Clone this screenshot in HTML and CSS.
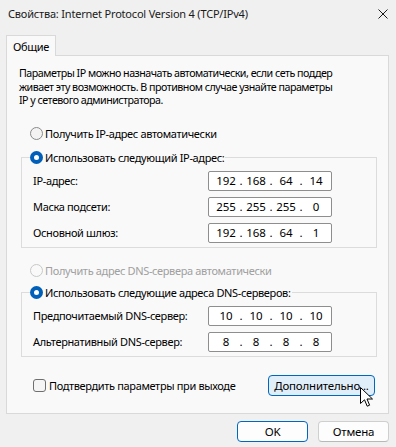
FILE: index.html
```html
<!DOCTYPE html>
<html lang="ru">
<head>
	<meta charset="UTF-8"/>
	<title>Свойства: Internet Protocol Version 4 (TCP/IPv4)</title>
	<link rel="stylesheet" href="styles.css">
</head>
<body>

<div class="titlebar">
	<span>Свойства: Internet Protocol Version 4 (TCP/IPv4)</span>
	<svg class="close" width="10" height="10" viewBox="0 0 10 10"><path d="M0.5 0.5L9.5 9.5M9.5 0.5L0.5 9.5" stroke="#1a1a1a" stroke-width="1"/></svg>
</div>

<div class="tabs">
	<div class="tab">Общие</div>
</div>

<main class="panel">
	<p class="intro">
		Параметры IP можно назначать автоматически, если сеть поддер<br>
		живает эту возможность. В противном случае узнайте параметры<br>
		IP у сетевого администратора.
	</p>

	<label class="option"><span class="radio"></span>Получить IP-адрес автоматически</label>

	<fieldset class="group">
		<legend><label class="option"><span class="radio checked"></span>Использовать следующий IP-адрес:</label></legend>
		<div class="row"><span>IP-адрес:</span>
			<div class="ip"><span>192</span><i>.</i><span>168</span><i>.</i><span>64</span><i>.</i><span>14</span></div></div>
		<div class="row"><span>Маска подсети:</span>
			<div class="ip"><span>255</span><i>.</i><span>255</span><i>.</i><span>255</span><i>.</i><span>0</span></div></div>
		<div class="row"><span>Основной шлюз:</span>
			<div class="ip"><span>192</span><i>.</i><span>168</span><i>.</i><span>64</span><i>.</i><span>1</span></div></div>
	</fieldset>

	<label class="option disabled dns-auto"><span class="radio"></span>Получить адрес DNS-сервера автоматически</label>

	<fieldset class="group dns">
		<legend><label class="option"><span class="radio checked"></span>Использовать следующие адреса DNS-серверов:</label></legend>
		<div class="row"><span>Предпочитаемый DNS-сервер:</span>
			<div class="ip"><span>10</span><i>.</i><span>10</span><i>.</i><span>10</span><i>.</i><span>10</span></div></div>
		<div class="row"><span>Альтернативный DNS-сервер:</span>
			<div class="ip"><span>8</span><i>.</i><span>8</span><i>.</i><span>8</span><i>.</i><span>8</span></div></div>
	</fieldset>

	<div class="bottom">
		<label class="option"><span class="check"></span>Подтвердить параметры при выходе</label>
		<div class="btn-wrap">
			<button class="btn hover">Дополнительно...</button>
			<svg class="cursor" width="14" height="21" viewBox="0 0 14 21"><path d="M0.5 0.5V16.5L4.5 12.8L7.2 19.2L9.6 18.2L7 12H12.5Z" fill="#fff" stroke="#000" stroke-width="1" stroke-linejoin="round"/></svg>
		</div>
	</div>
</main>

<footer class="actions">
	<button class="btn default">OK</button>
	<button class="btn">Отмена</button>
</footer>

</body>
</html>
```

FILE: styles.css
```css
* {box-sizing: border-box;}
html, body {
	margin: 0;
	padding: 0;
}
body {
	background: #f0f0f0;
	color: #000;
	font-family: "Noto Sans", "Liberation Sans", sans-serif;
	font-size: 11px;
	letter-spacing: -0.35px;
	width: 396px;
	height: 447px;
	overflow: hidden;
	white-space: nowrap;
}
.titlebar {
	display: flex;
	align-items: center;
	justify-content: space-between;
	height: 27px;
	padding: 0 8px 0 8px;
	color: #1a1a1a;
	font-size: 11px;
	letter-spacing: -0.2px;
}
.tabs {
	display: flex;
	padding: 8px 0 0 6px;
}
.tab {
	height: 21px;
	width: 50px;
	padding: 3px 0 0 6px;
	background: #f9f9f9;
	border: 1px solid #d9d9d9;
	border-bottom: none;
	margin-bottom: -1px;
	position: relative;
	z-index: 1;
}
.panel {
	margin: 0 7px 0 6px;
	height: 359px;
	background: #f9f9f9;
	border: 1px solid #d9d9d9;
	padding: 11px 0 0 12px;
}
.intro {
	margin: 0;
	font-size: 10.7px;
	letter-spacing: -0.5px;
	line-height: 13.5px;
}
.option {
	display: flex;
	align-items: center;
	gap: 2px;
	height: 16px;
}
.panel > .option {
	margin: 18px 0 0 11px;
}
.radio {
	width: 13px;
	height: 13px;
	border-radius: 50%;
	border: 1px solid #8a8a8a;
	background: #f3f3f3;
	flex: none;
}
.radio.checked {
	border: none;
	background: #005fb8;
	position: relative;
}
.radio.checked::after {
	content: "";
	position: absolute;
	left: 4px;
	top: 4px;
	width: 5px;
	height: 5px;
	border-radius: 50%;
	background: #fff;
}
.disabled {
	color: #a0a0a0;
}
.disabled .radio {
	border-color: #c8c8c8;
	background: #f9f9f9;
}
.group {
	margin: 8px 0 0 2px;
	width: 356px;
	border: 1px solid #dcdcdc;
	padding: 5px 0 4px 11px;
}
.group legend {
	padding: 0 1px 0 0;
	margin-left: -3px;
}
.row {
	display: flex;
	align-items: center;
	justify-content: space-between;
	height: 20px;
	margin-bottom: 6px;
	padding-right: 44px;
}
.row:last-child {
	margin-bottom: 0;
}
.ip {
	display: grid;
	grid-template-columns: 24px 6px 24px 6px 24px 6px 24px;
	align-items: center;
	width: 124px;
	height: 20px;
	padding: 0 5px;
	background: #fff;
	border: 1px solid #8e8e8e;
	border-radius: 2px;
	text-align: center;
	font-size: 11.5px;
	letter-spacing: 0;
}
.ip i {
	font-style: normal;
}
.panel > .dns-auto {
	margin-top: 15px;
}
.group.dns {
	margin-top: 6px;
}
.bottom {
	display: flex;
	align-items: center;
	justify-content: space-between;
	margin: 18px 0 0 14px;
	width: 342px;
}
.bottom .option {
	gap: 3px;
}
.check {
	width: 13px;
	height: 13px;
	border: 1px solid #6f6f6f;
	border-radius: 3px;
	background: #f5f5f5;
}
.btn-wrap {
	position: relative;
}
.btn {
	font-family: inherit;
	font-size: 11.5px;
	letter-spacing: -0.2px;
	color: #000;
	height: 21px;
	width: 71px;
	padding: 0;
	background: #fdfdfd;
	border: 1px solid #cfcfcf;
	border-bottom-color: #b8b8b8;
	border-radius: 4px;
}
.btn.hover {
	width: 107px;
	background: #e0eef9;
	border-color: #0067c0;
}
.btn.default {
	border: 1px solid #0067c0;
}
.cursor {
	position: absolute;
	left: 92px;
	top: 12px;
}
.actions {
	display: flex;
	justify-content: flex-end;
	gap: 10px;
	padding: 7px 7px 0 0;
}
```
